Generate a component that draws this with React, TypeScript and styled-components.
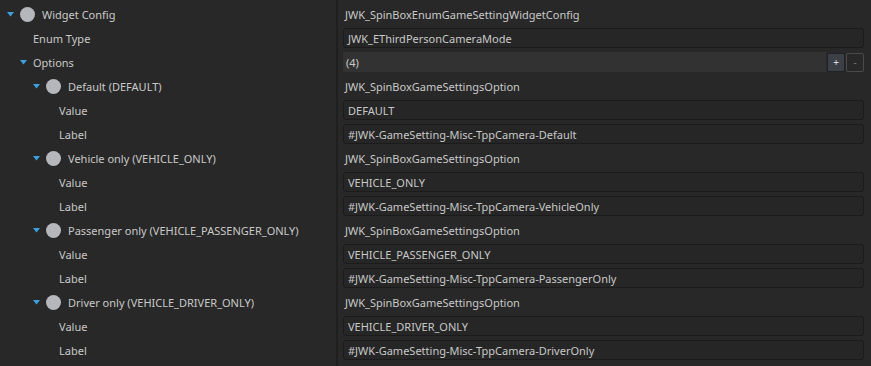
import React from 'react'
import styled, { createGlobalStyle } from 'styled-components'

const GlobalStyle = createGlobalStyle`
  html, body {
    margin: 0;
    padding: 0;
    background: #282828;
  }
  body {
    font-family: 'Noto Sans', 'Open Sans', sans-serif;
    font-size: 11px;
    color: #c8c8c8;
  }
`

const Grid = styled.div`
  display: grid;
  grid-template-columns: 336px 2px 1fr;
  width: 871px;
  height: 366px;
  background: #282828;
  padding-top: 2px;
  box-sizing: border-box;
`

const Column = styled.div`
  display: flex;
  flex-direction: column;
`

const Divider = styled.div`
  background: #1f1f1f;
  margin-top: -2px;
`

const TreeRow = styled.div<{ $level: number }>`
  height: 24px;
  display: flex;
  align-items: center;
  padding-left: ${({ $level }) => 7 + $level * 13}px;
  white-space: nowrap;
`

const Arrow = styled.span`
  width: 13px;
  flex: none;
  display: flex;
  align-items: center;
`

const Dot = styled.span`
  width: 15px;
  height: 15px;
  border-radius: 50%;
  background: #b6b6bd;
  margin-right: 7px;
  flex: none;
`

const ValueRow = styled.div`
  height: 24px;
  display: flex;
  align-items: center;
  padding: 0 7px 0 5px;
  gap: 1px;
`

const Plain = styled.span`
  padding-left: 2px;
  white-space: nowrap;
`

const Field = styled.div`
  flex: 1;
  height: 20px;
  box-sizing: border-box;
  border: 1px solid #1b1b1b;
  border-radius: 3px;
  background: #262626;
  display: flex;
  align-items: center;
  padding-left: 4px;
  white-space: nowrap;
`

const ArrayBar = styled.div`
  flex: 1;
  height: 20px;
  background: #323232;
  display: flex;
  align-items: center;
  padding-left: 3px;
`

const SmallButton = styled.div<{ $filled?: boolean }>`
  width: 18px;
  height: 19px;
  box-sizing: border-box;
  border-radius: 2px;
  border: 1px solid ${({ $filled }) => ($filled ? '#202224' : '#4a4a4a')};
  background: ${({ $filled }) => ($filled ? '#3b4046' : 'transparent')};
  color: ${({ $filled }) => ($filled ? '#dddddd' : '#777')};
  font-size: 10px;
  line-height: 17px;
  text-align: center;
  flex: none;
`

const TriangleIcon = () => (
  <svg width="7" height="5" viewBox="0 0 7 5">
    <path d="M0 0 L7 0 L3.5 4.5 Z" fill="#3fa0e0" />
  </svg>
)

type Node = { level: number; label: string; arrow?: boolean; dot?: boolean }

const tree: Node[] = [
  { level: 0, label: 'Widget Config', arrow: true, dot: true },
  { level: 1, label: 'Enum Type' },
  { level: 1, label: 'Options', arrow: true },
  { level: 2, label: 'Default (DEFAULT)', arrow: true, dot: true },
  { level: 3, label: 'Value' },
  { level: 3, label: 'Label' },
  { level: 2, label: 'Vehicle only (VEHICLE_ONLY)', arrow: true, dot: true },
  { level: 3, label: 'Value' },
  { level: 3, label: 'Label' },
  { level: 2, label: 'Passenger only (VEHICLE_PASSENGER_ONLY)', arrow: true, dot: true },
  { level: 3, label: 'Value' },
  { level: 3, label: 'Label' },
  { level: 2, label: 'Driver only (VEHICLE_DRIVER_ONLY)', arrow: true, dot: true },
  { level: 3, label: 'Value' },
  { level: 3, label: 'Label' },
]

type Val = { kind: 'text' | 'field' | 'array'; text: string }

const options = [
  ['DEFAULT', 'Default'],
  ['VEHICLE_ONLY', 'VehicleOnly'],
  ['VEHICLE_PASSENGER_ONLY', 'PassengerOnly'],
  ['VEHICLE_DRIVER_ONLY', 'DriverOnly'],
]

const values: Val[] = [
  { kind: 'text', text: 'JWK_SpinBoxEnumGameSettingWidgetConfig' },
  { kind: 'field', text: 'JWK_EThirdPersonCameraMode' },
  { kind: 'array', text: '(4)' },
  ...options.flatMap(([v, l]): Val[] => [
    { kind: 'text', text: 'JWK_SpinBoxGameSettingsOption' },
    { kind: 'field', text: v },
    { kind: 'field', text: `#JWK-GameSetting-Misc-TppCamera-${l}` },
  ]),
]

export default function App() {
  return (
    <>
      <GlobalStyle />
      <Grid>
        <Column>
          {tree.map((n, i) => (
            <TreeRow key={i} $level={n.level}>
              <Arrow>{n.arrow && <TriangleIcon />}</Arrow>
              {n.dot && <Dot />}
              {n.label}
            </TreeRow>
          ))}
        </Column>
        <Divider />
        <Column>
          {values.map((v, i) => (
            <ValueRow key={i}>
              {v.kind === 'text' && <Plain>{v.text}</Plain>}
              {v.kind === 'field' && <Field>{v.text}</Field>}
              {v.kind === 'array' && (
                <>
                  <ArrayBar>{v.text}</ArrayBar>
                  <SmallButton $filled>+</SmallButton>
                  <SmallButton>-</SmallButton>
                </>
              )}
            </ValueRow>
          ))}
        </Column>
      </Grid>
    </>
  )
}
